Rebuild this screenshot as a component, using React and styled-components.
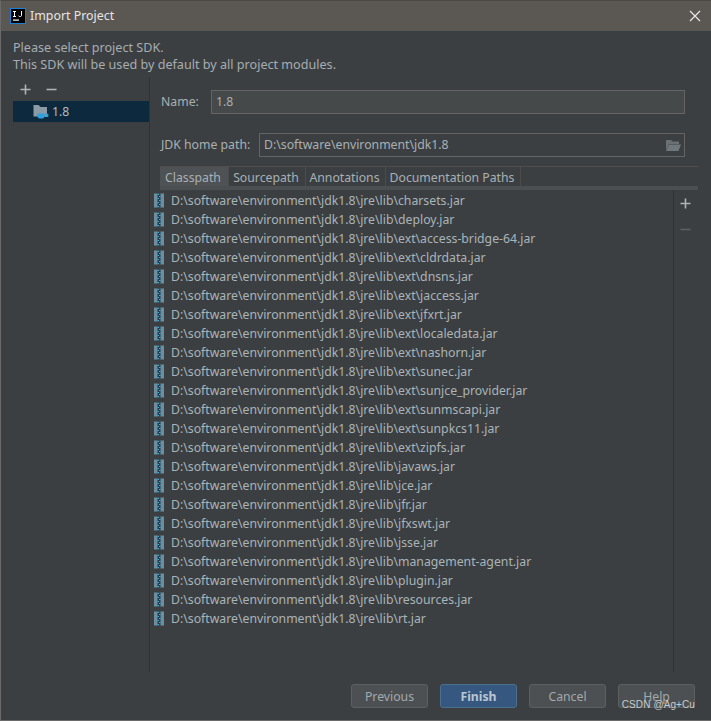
import React from "react";
import styled, { createGlobalStyle } from "styled-components";

const Global = createGlobalStyle`
  html, body { margin: 0; padding: 0; background: #3c3f41; }
  * { box-sizing: border-box; }
`;

const Window = styled.div`
  position: relative;
  width: 711px;
  height: 721px;
  background: #3c3f41;
  border: 1px solid #6a6a6a;
  border-top-color: #4b4945;
  border-right-width: 0;
  display: flex;
  flex-direction: column;
  font-family: "Noto Sans", "Open Sans", sans-serif;
  font-size: 12.25px;
  color: #a9b0b4;
  overflow: hidden;
`;

const TitleBar = styled.div`
  height: 30px;
  flex: none;
  background: #5b5753;
  display: flex;
  align-items: center;
  padding: 0 10px 1px 9px;
  gap: 4px;
  color: #e6e6e4;
  font-size: 12.4px;
`;

const TitleText = styled.span`
  flex: 1;
`;

const Intro = styled.div`
  padding: 8px 0 0 12px;
  height: 46px;
  flex: none;
  line-height: 17px;
  font-size: 12.6px;
  color: #a6adb1;
`;

const Main = styled.div`
  flex: none;
  height: 595px;
  display: flex;
`;

const Sidebar = styled.div`
  width: 149px;
  flex: none;
  border-right: 1px solid #323232;
  padding-left: 12px;
  display: flex;
  flex-direction: column;
`;

const SideTools = styled.div`
  height: 24px;
  display: flex;
  align-items: center;
  gap: 15px;
  padding: 0 0 0 7px;
`;

const SideRow = styled.div`
  height: 21px;
  background: #0d293e;
  display: flex;
  align-items: center;
  gap: 3px;
  padding-left: 20px;
  color: #b4bbbf;
`;

const Content = styled.div`
  flex: 1;
  display: flex;
  flex-direction: column;
  padding: 13px 13px 0 10px;
  min-width: 0;
`;

const FieldRow = styled.div`
  display: flex;
  align-items: center;
  height: 24px;
  margin-bottom: ${(p) => p.$gap}px;
  padding-right: 13px;
`;

const FieldLabel = styled.label`
  width: ${(p) => p.$w}px;
  flex: none;
  padding-left: 1px;
  padding-bottom: 1px;
  color: #a9b0b4;
`;

const Field = styled.div`
  flex: 1;
  height: 24px;
  background: ${(p) => (p.$filled ? "#45494a" : "#3c3f41")};
  border: 1px solid #646464;
  display: flex;
  align-items: center;
  justify-content: space-between;
  padding: 0 3px 2px 4px;
  color: #a9b0b4;
`;

const FolderSlot = styled.span`
  display: flex;
  margin-top: 2px;
`;

const TabBar = styled.div`
  height: 24px;
  flex: none;
  display: flex;
  border-top: 1px solid #4f4f4f;
  border-bottom: 4px solid #4b4f51;
`;

const Tab = styled.div`
  width: ${(p) => p.$w}px;
  background: ${(p) => (p.$active ? "#4e5254" : "transparent")};
  border-right: 1px solid #4c4c4c;
  display: flex;
  align-items: center;
  justify-content: center;
  color: #a9b0b4;
  padding: 1px 2px 0 0;
`;

const ListArea = styled.div`
  flex: 1;
  display: flex;
  min-height: 0;
  margin-left: -10px;
`;

const List = styled.div`
  flex: 1;
  padding: 1px 0 0 4px;
  border-right: 1px solid #323232;
`;

const Row = styled.div`
  height: 19px;
  display: flex;
  align-items: center;
  gap: 7px;
  color: #a9b4ba;
  white-space: nowrap;
`;

const ListTools = styled.div`
  width: 24px;
  flex: none;
  display: flex;
  flex-direction: column;
  align-items: center;
  gap: 15px;
  padding: 8px 1px 0 0;
`;

const Footer = styled.div`
  flex: 1;
  display: flex;
  justify-content: flex-end;
  align-items: flex-start;
  gap: 12px;
  padding: 12px 16px 0 0;
`;

const Button = styled.div`
  width: 77px;
  height: 24px;
  border-radius: 3px;
  border: 1px solid ${(p) => (p.$primary ? "#4c708c" : "#5e6060")};
  background: ${(p) => (p.$primary ? "#365880" : "#4c5052")};
  color: ${(p) => (p.$primary ? "#b9c6d2" : "#a3a9ac")};
  font-weight: ${(p) => (p.$primary ? 700 : 400)};
  display: flex;
  align-items: center;
  justify-content: center;
  padding-top: 1px;
`;

const Watermark = styled.div`
  position: absolute;
  right: 16px;
  bottom: 10px;
  font-family: "Liberation Sans", Arial, sans-serif;
  font-size: 10px;
  color: #c9cbcc;
  letter-spacing: 0.1px;
`;

const IJLogo = () => (
  <svg width="16" height="16" viewBox="0 0 16 16">
    <rect x="0.5" y="0.5" width="15" height="15" fill="#000" stroke="#1c7fd6" />
    <rect x="3" y="11.5" width="6" height="1.2" fill="#fff" />
    <path d="M3 3.5h3M4.5 3.5v5M3 8.5h3M11.5 3v4.4c0 1.4-2 1.5-2.9.5" stroke="#fff" strokeWidth="1" fill="none" />
  </svg>
);

const Close = () => (
  <svg width="12" height="12" viewBox="0 0 12 12">
    <path d="M1 1l10 10M11 1L1 11" stroke="#e8e8e8" strokeWidth="1.2" />
  </svg>
);

const Plus = ({ color = "#b0b3b5" }) => (
  <svg width="11" height="11" viewBox="0 0 11 11">
    <path d="M5.5 0.5v10M0.5 5.5h10" stroke={color} strokeWidth="1.6" />
  </svg>
);

const Minus = ({ color = "#b0b3b5" }) => (
  <svg width="11" height="11" viewBox="0 0 11 11">
    <path d="M0.5 5.5h10" stroke={color} strokeWidth="1.6" />
  </svg>
);

const SdkIcon = () => (
  <svg width="16" height="15" viewBox="0 0 16 15">
    <path d="M0.5 1h5l2 2h6.5v9.5H0.5z" fill="#8c9aa5" />
    <path d="M4.5 9.5h7v2.7c0 1.2-.8 2.3-2 2.3h-3c-1.2 0-2-1.1-2-2.3z" fill="#2ea0dc" />
    <path d="M11.5 10.3h3.2v2H11.5" fill="none" stroke="#2ea0dc" strokeWidth="1.2" />
  </svg>
);

const FolderOpen = () => (
  <svg width="16" height="13" viewBox="0 0 16 13">
    <path d="M1 1h5l1.5 1.5H14V5H4L1 11z" fill="#6b7073" />
    <path d="M3.8 5.5H16L13.5 12H1z" fill="#6f787d" />
  </svg>
);

const JarIcon = () => (
  <svg width="10" height="15" viewBox="0 0 10 15">
    <rect x="0" y="0.5" width="10" height="14" fill="#6f8d9c" />
    <rect x="3.5" y="0.5" width="3" height="14" fill="#1f3c4c" />
    <path d="M3.5 1.5h1.5M5 3.5h1.5M3.5 5.5h1.5M5 7.5h1.5M3.5 9.5h1.5M5 11.5h1.5M3.5 13.5h1.5" stroke="#35b4e6" strokeWidth="1.1" />
  </svg>
);

const base = "D:\\software\\environment\\jdk1.8\\jre\\lib\\";
const jars = [
  "charsets.jar", "deploy.jar", "ext\\access-bridge-64.jar", "ext\\cldrdata.jar", "ext\\dnsns.jar",
  "ext\\jaccess.jar", "ext\\jfxrt.jar", "ext\\localedata.jar", "ext\\nashorn.jar", "ext\\sunec.jar",
  "ext\\sunjce_provider.jar", "ext\\sunmscapi.jar", "ext\\sunpkcs11.jar", "ext\\zipfs.jar", "javaws.jar",
  "jce.jar", "jfr.jar", "jfxswt.jar", "jsse.jar", "management-agent.jar", "plugin.jar", "resources.jar", "rt.jar",
];

export default function App() {
  return (
    <>
      <Global />
      <Window>
        <TitleBar>
          <IJLogo />
          <TitleText>Import Project</TitleText>
          <Close />
        </TitleBar>
        <Intro>
          <div>Please select project SDK.</div>
          <div>This SDK will be used by default by all project modules.</div>
        </Intro>
        <Main>
          <Sidebar>
            <SideTools>
              <Plus />
              <Minus />
            </SideTools>
            <SideRow>
              <SdkIcon />
              <span>1.8</span>
            </SideRow>
          </Sidebar>
          <Content>
            <FieldRow $gap={19}>
              <FieldLabel $w={51}>Name:</FieldLabel>
              <Field $filled>1.8</Field>
            </FieldRow>
            <FieldRow $gap={9}>
              <FieldLabel $w={99}>JDK home path:</FieldLabel>
              <Field>
                <span>D:\software\environment\jdk1.8</span>
                <FolderSlot><FolderOpen /></FolderSlot>
              </Field>
            </FieldRow>
            <TabBar>
              <Tab $w={69} $active>Classpath</Tab>
              <Tab $w={77}>Sourcepath</Tab>
              <Tab $w={80}>Annotations</Tab>
              <Tab $w={135}>Documentation Paths</Tab>
            </TabBar>
            <ListArea>
              <List>
                {jars.map((j) => (
                  <Row key={j}>
                    <JarIcon />
                    <span>{base + j}</span>
                  </Row>
                ))}
              </List>
              <ListTools>
                <Plus />
                <Minus color="#5c6063" />
              </ListTools>
            </ListArea>
          </Content>
        </Main>
        <Footer>
          <Button>Previous</Button>
          <Button $primary>Finish</Button>
          <Button>Cancel</Button>
          <Button>Help</Button>
        </Footer>
        <Watermark>CSDN @Ag+Cu</Watermark>
      </Window>
    </>
  );
}
